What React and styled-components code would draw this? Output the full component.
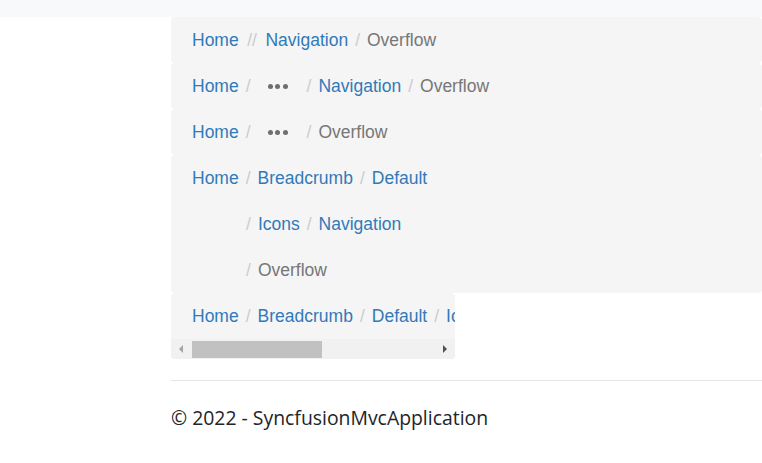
import React from "react";
import styled, { createGlobalStyle } from "styled-components";

const Global = createGlobalStyle`
  html, body { margin: 0; padding: 0; background: #fff; }
  body { font-family: "Liberation Sans", Arial, sans-serif; }
`;

const TopBand = styled.div`
  height: 17px;
  background: #f8f9fa;
`;

const Main = styled.main`
  margin-left: 171px;
  display: flex;
  flex-direction: column;
  align-items: flex-start;
`;

const Crumbs = styled.nav`
  box-sizing: border-box;
  width: ${(p) => (p.$narrow ? "284px" : "100%")};
  background: #f5f5f5;
  border-radius: 4px;
  overflow: hidden;
  display: flex;
  flex-direction: column;
`;

const Line = styled.ol`
  list-style: none;
  margin: 0;
  padding: 0 0 0 21px;
  height: 46px;
  display: flex;
  align-items: center;
  white-space: nowrap;
  font-size: 17.5px;
  flex-shrink: 0;
`;

const Indent = styled.span`
  display: inline-block;
  width: 47px;
  flex-shrink: 0;
`;

const Link = styled.a`
  color: #317ab9;
  text-decoration: none;
  cursor: pointer;
  flex-shrink: 0;
`;

const Current = styled.span`
  color: #777;
  flex-shrink: 0;
`;

const Sep = styled.span`
  color: #ccc;
  margin: 0 ${(p) => (p.$double ? "8.5px" : "7px")};
  flex-shrink: 0;
`;

const Dots = styled.span`
  display: flex;
  align-items: center;
  gap: 2.5px;
  padding: 0 12px 0 10px;
  height: 20px;
  flex-shrink: 0;
`;

const Dot = styled.i`
  width: 5px;
  height: 5px;
  border-radius: 50%;
  background: #6f6f6f;
`;

const ScrollBar = styled.div`
  height: 20px;
  background: #f1f1f1;
  display: flex;
  align-items: center;
`;

const Arrow = styled.span`
  width: 21px;
  height: 20px;
  display: flex;
  align-items: center;
  justify-content: center;
  flex-shrink: 0;
`;

const Track = styled.div`
  flex: 1;
  height: 100%;
  display: flex;
  align-items: center;
`;

const Thumb = styled.div`
  width: 130px;
  height: 17px;
  background: #c1c1c1;
`;

const Footer = styled.footer`
  margin: 21px 0 0 171px;
  border-top: 1px solid #e5e5e5;
  padding-top: 22px;
  font-family: "Open Sans", "Noto Sans", sans-serif;
  font-size: 19.4px;
  line-height: 1.5;
  color: #212529;
`;

const Sl = () => <Sep>/</Sep>;

const More = () => (
  <Dots>
    <Dot />
    <Dot />
    <Dot />
  </Dots>
);

export default function App() {
  return (
    <>
      <Global />
      <TopBand />
      <Main>
        <Crumbs>
          <Line>
            <Link>Home</Link>
            <Sep $double>//</Sep>
            <Link>Navigation</Link>
            <Sl />
            <Current>Overflow</Current>
          </Line>
        </Crumbs>
        <Crumbs>
          <Line>
            <Link>Home</Link>
            <Sl />
            <More />
            <Sl />
            <Link>Navigation</Link>
            <Sl />
            <Current>Overflow</Current>
          </Line>
        </Crumbs>
        <Crumbs>
          <Line>
            <Link>Home</Link>
            <Sl />
            <More />
            <Sl />
            <Current>Overflow</Current>
          </Line>
        </Crumbs>
        <Crumbs>
          <Line>
            <Link>Home</Link>
            <Sl />
            <Link>Breadcrumb</Link>
            <Sl />
            <Link>Default</Link>
          </Line>
          <Line>
            <Indent />
            <Sl />
            <Link>Icons</Link>
            <Sl />
            <Link>Navigation</Link>
          </Line>
          <Line>
            <Indent />
            <Sl />
            <Current>Overflow</Current>
          </Line>
        </Crumbs>
        <Crumbs $narrow>
          <Line>
            <Link>Home</Link>
            <Sl />
            <Link>Breadcrumb</Link>
            <Sl />
            <Link>Default</Link>
            <Sl />
            <Link>Icons</Link>
          </Line>
          <ScrollBar>
            <Arrow>
              <svg width="5" height="8" viewBox="0 0 5 8">
                <path d="M4 0 L0 4 L4 8 Z" fill="#a3a3a3" />
              </svg>
            </Arrow>
            <Track>
              <Thumb />
            </Track>
            <Arrow>
              <svg width="5" height="8" viewBox="0 0 5 8">
                <path d="M1 0 L5 4 L1 8 Z" fill="#505050" />
              </svg>
            </Arrow>
          </ScrollBar>
        </Crumbs>
      </Main>
      <Footer>© 2022 - SyncfusionMvcApplication</Footer>
    </>
  );
}
